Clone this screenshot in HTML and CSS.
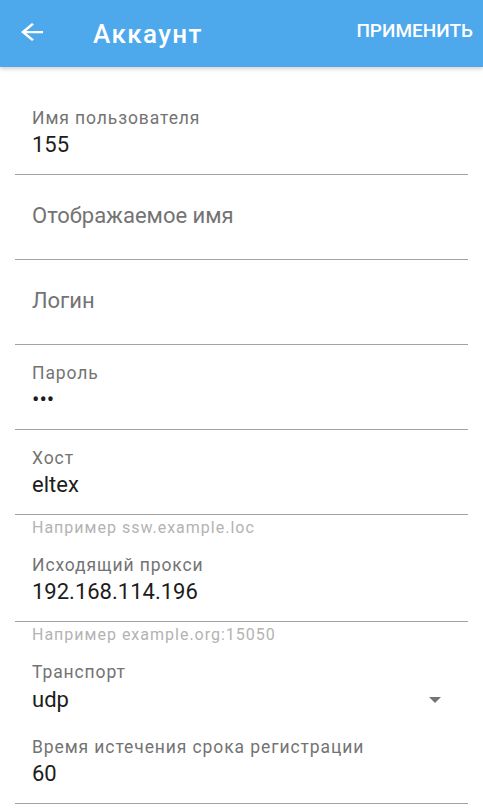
FILE: index.html
```html
<!DOCTYPE html>
<html lang="ru">
<head>
  <meta charset="UTF-8" />
  <meta name="viewport" content="width=device-width, initial-scale=1.0"/>
  <title>Аккаунт</title>
  <link rel="stylesheet" href="styles.css">
</head>
<body>

  <header class="toolbar">
    <span class="back">
      <svg width="22" height="18" viewBox="4 4 16 16" preserveAspectRatio="none">
        <path d="M20 11H7.83l5.59-5.59L12 4l-8 8 8 8 1.41-1.41L7.83 13H20v-2z" fill="#fff"/>
      </svg>
    </span>
    <h1 class="title">Аккаунт</h1>
    <span class="action">ПРИМЕНИТЬ</span>
  </header>

  <main class="form">
    <div class="field">
      <div class="label">Имя пользователя</div>
      <div class="value">155</div>
    </div>
    <div class="field empty">
      <div class="placeholder">Отображаемое имя</div>
    </div>
    <div class="field empty">
      <div class="placeholder">Логин</div>
    </div>
    <div class="field">
      <div class="label">Пароль</div>
      <div class="value dots">•••</div>
    </div>
    <div class="field">
      <div class="label">Хост</div>
      <div class="value">eltex</div>
    </div>
    <div class="hint">Например ssw.example.loc</div>
    <div class="field">
      <div class="label">Исходящий прокси</div>
      <div class="value">192.168.114.196</div>
    </div>
    <div class="hint">Например example.org:15050</div>
    <div class="field spinner">
      <div class="label">Транспорт</div>
      <div class="value select">
        udp
        <span class="caret"></span>
      </div>
    </div>
    <div class="field">
      <div class="label">Время истечения срока регистрации</div>
      <div class="value">60</div>
    </div>
  </main>

</body>
</html>
```

FILE: styles.css
```css
body {
  margin: 0;
  font-family: Roboto, "Noto Sans", sans-serif;
  background: #fff;
  color: #1c1c1c;
}

.toolbar {
  height: 67px;
  display: flex;
  align-items: center;
  background: #4ea8ec;
  color: #fff;
  box-shadow: 0 2px 4px rgba(0, 0, 0, 0.18);
  position: relative;
}
.back {
  display: flex;
  margin-left: 21px;
  margin-top: -4px;
}
.title {
  margin: 0 0 0 50px;
  font-size: 26px;
  font-weight: 500;
  line-height: 30px;
  letter-spacing: 1.4px;
  flex: 1;
}
.action {
  margin-right: 10px;
  font-size: 19px;
  font-weight: 500;
  line-height: 22px;
  margin-top: -6px;
}

.form {
  padding: 23px 15px 0;
  display: flex;
  flex-direction: column;
}
.field {
  height: 85px;
  box-sizing: border-box;
  padding: 18px 17px 0;
  border-bottom: 1px solid #a2a2a2;
}
.label {
  font-size: 17.5px;
  line-height: 20px;
  letter-spacing: 0.9px;
  color: #737373;
}
.value {
  margin-top: 4px;
  font-size: 22px;
  line-height: 26px;
  color: #1c1c1c;
}
.field.empty {
  padding-top: 28px;
}
.placeholder {
  font-size: 22px;
  line-height: 26px;
  color: #737373;
}
.hint {
  height: 22px;
  box-sizing: border-box;
  padding: 5px 17px 0;
  font-size: 16px;
  line-height: 16px;
  letter-spacing: 1px;
  color: #b3b3b3;
}
.field.spinner {
  height: 75px;
  border-bottom: none;
}
.spinner .value {
  margin-top: 5px;
}
.select {
  display: flex;
  justify-content: space-between;
  align-items: center;
}
.caret {
  width: 0;
  height: 0;
  margin-right: 10px;
  border-left: 6.5px solid transparent;
  border-right: 6.5px solid transparent;
  border-top: 6px solid #757575;
}
```
